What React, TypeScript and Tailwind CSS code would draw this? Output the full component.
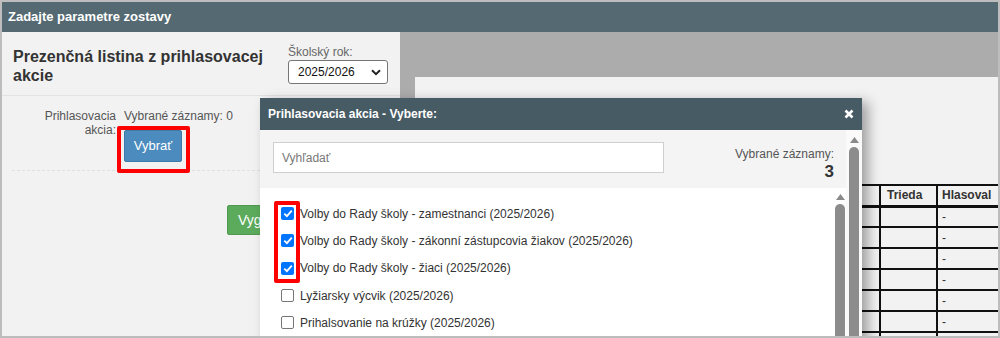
import React from "react";

const ITEMS = [
  { label: "Volby do Rady školy - zamestnanci (2025/2026)", checked: true },
  { label: "Volby do Rady školy - zákonní zástupcovia žiakov (2025/2026)", checked: true },
  { label: "Volby do Rady školy - žiaci (2025/2026)", checked: true },
  { label: "Lyžiarsky výcvik (2025/2026)", checked: false },
  { label: "Prihalsovanie na krúžky (2025/2026)", checked: false },
];

function ScrollArrow() {
  return (
    <svg width="9" height="6" viewBox="0 0 9 6" className="mx-auto block">
      <path d="M4.5 0 L9 6 L0 6 Z" fill="#8a8a8a" />
    </svg>
  );
}

function Checkbox({ checked }: { checked: boolean }) {
  if (checked) {
    return (
      <span className="flex h-[13px] w-[13px] shrink-0 items-center justify-center rounded-[2px] bg-[#0075ff]">
        <svg width="10" height="9" viewBox="0 0 10 9">
          <path d="M1.3 4.6 L3.9 7.1 L8.8 1.6" fill="none" stroke="#fff" strokeWidth="1.9" />
        </svg>
      </span>
    );
  }
  return <span className="h-[13px] w-[13px] shrink-0 rounded-[2px] border border-[#767676] bg-white" />;
}

export default function App() {
  const rows = [0, 1, 2, 3, 4, 5, 6];
  return (
    <div className="relative h-[338px] w-[1000px] overflow-hidden border-2 border-[#bdbdbd] bg-[#f2f2f2] font-['Liberation_Sans',Arial,sans-serif] text-[#333]">
      <div className="flex h-[30px] items-center bg-[#546971] px-[6px] text-[13px] font-bold text-white">
        Zadajte parametre zostavy
      </div>

      <div className="flex h-[304px]">
        {/* left panel */}
        <div className="w-[398px] shrink-0">
          <div className="flex h-[64px] items-start justify-between border-b border-[#e3e3e3] pl-[11px] pr-[12px] pt-[13px]">
            <h1 className="mt-[2px] w-[265px] text-[16px] font-bold leading-[19px] text-[#333]">
              Prezenčná listina z prihlasovacej akcie
            </h1>
            <div className="flex flex-col">
              <span className="text-[12px] leading-[14px] text-[#666]">Školský rok:</span>
              <div className="mt-[1px] flex h-[24px] w-[100px] items-center justify-between rounded-[3px] border border-[#767676] bg-white pl-[9px] pr-[6px] text-[12px] text-[#111]">
                <span>2025/2026</span>
                <svg width="10" height="7" viewBox="0 0 10 7">
                  <path d="M1 1.2 L5 5.2 L9 1.2" fill="none" stroke="#222" strokeWidth="2" />
                </svg>
              </div>
            </div>
          </div>

          <div className="flex pt-[13px]">
            <div className="w-[114px] pl-[30px] text-right text-[12px] leading-[14px] text-[#555]">
              Prihlasovacia akcia:
            </div>
            <div className="pl-[8px]">
              <div className="text-[12px] leading-[14px] text-[#555]">Vybrané záznamy: 0</div>
              <button className="mt-[7px] h-[32px] w-[58px] rounded-[2px] border border-[#3f7aa8] bg-[#4b8bbe] text-[13px] text-white">
                Vybrať
              </button>
            </div>
          </div>
          <div className="ml-[10px] mt-[8px] border-t border-dashed border-[#e0e0e0]" />

          <div className="pl-[225px] pt-[34px]">
            <button className="h-[30px] w-[120px] rounded-[2px] border border-[#4f9a4f] bg-[#5cab5c] pl-[10px] text-left text-[14px] text-white">
              Vygenerovať
            </button>
          </div>
        </div>

        {/* right area */}
        <div className="flex flex-1 flex-col bg-[#acacac] pl-[15px] pt-[45px]">
          <div className="flex flex-1 flex-col bg-[#f2f2f2] pt-[107px]">
            <table className="ml-auto border-collapse text-[12px]">
              <thead>
                <tr className="h-[21px] border-b-[3px] border-t-2 border-[#111]">
                  <th className="w-[100px] border-r-2 border-[#111]" />
                  <th className="w-[57px] border-r-2 border-[#111] px-[6px] text-left font-bold">Trieda</th>
                  <th className="w-[61px] px-[4px] text-left font-bold">Hlasoval</th>
                </tr>
              </thead>
              <tbody>
                {rows.map((r) => (
                  <tr key={r} className="h-[21px] border-b-2 border-[#111]">
                    <td className="border-r-2 border-[#111]" />
                    <td className="border-r-2 border-[#111]" />
                    <td className="px-[4px] text-[#333]">-</td>
                  </tr>
                ))}
              </tbody>
            </table>
          </div>
        </div>
      </div>

      {/* modal */}
      <div className="absolute left-[258px] top-[96px] w-[602px] shadow-[6px_4px_12px_rgba(0,0,0,0.35)]">
        <div className="flex h-[32px] items-center justify-between bg-[#475b65] pl-[8px] pr-[8px] text-[12px] font-bold text-white">
          <span>Prihlasovacia akcia - Vyberte:</span>
          <svg width="10" height="10" viewBox="0 0 10 10">
            <path d="M1.5 1.5 L8.5 8.5 M8.5 1.5 L1.5 8.5" stroke="#fff" strokeWidth="2.6" />
          </svg>
        </div>
        <div className="flex h-[300px]">
          <div className="flex flex-1 flex-col">
            <div className="flex h-[58px] shrink-0 items-start justify-between bg-[#f4f4f4] pl-[13px] pr-[12px] pt-[12px]">
              <div className="flex h-[31px] w-[391px] items-center border border-[#cfcfcf] bg-white pl-[8px] text-[12px] text-[#777]">
                Vyhľadať
              </div>
              <div className="pt-[5px] text-right">
                <div className="text-[12px] leading-[14px] text-[#555]">Vybrané záznamy:</div>
                <div className="mt-[2px] text-[17px] font-bold leading-[18px] text-[#333]">3</div>
              </div>
            </div>
            <div className="flex flex-1 bg-white">
              <div className="flex-1 pl-[21px] pt-[12px]">
                {ITEMS.map((it) => (
                  <div key={it.label} className="flex h-[27.3px] items-center gap-[6px] text-[12px] text-[#333]">
                    <Checkbox checked={it.checked} />
                    <span>{it.label}</span>
                  </div>
                ))}
              </div>
              <div className="w-[12px] pt-[6px]">
                <ScrollArrow />
                <div className="mx-auto mt-[4px] h-[200px] w-[10px] rounded-full bg-[#8c8c8c]" />
              </div>
            </div>
          </div>
          <div className="w-[16px] bg-[#fafafa] pt-[7px]">
            <ScrollArrow />
            <div className="mx-auto mt-[4px] h-[260px] w-[10px] rounded-full bg-[#8c8c8c]" />
          </div>
        </div>
      </div>

      {/* annotations */}
      <div className="absolute left-[115px] top-[124px] h-[47px] w-[73px] rounded-[2px] border-4 border-[#ff0000]" />
      <div className="absolute left-[272px] top-[199px] h-[82px] w-[26px] rounded-[2px] border-4 border-[#ff0000]" />
    </div>
  );
}
